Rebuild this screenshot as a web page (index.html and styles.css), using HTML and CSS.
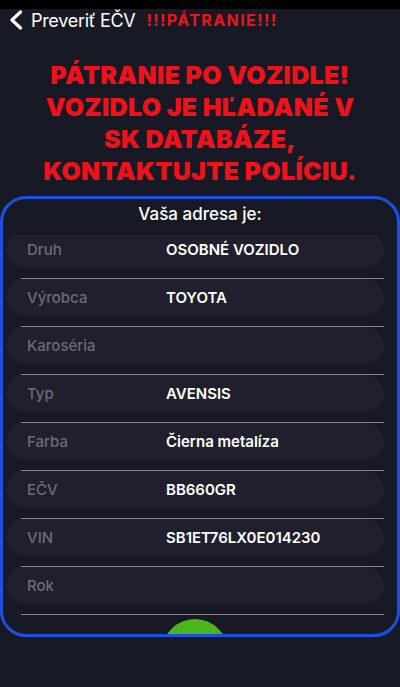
FILE: index.html
```html
<!DOCTYPE html>
<html>
    <head>
        <meta charset="utf-8">
        <link rel="stylesheet" href="styles.css">
    </head>
    <body>
        <div class="statusbar"></div>
        <div class="nav">
            <svg class="back" width="14" height="20" viewBox="0 0 14 20">
                <path d="M11.5 2 L3 10 L11.5 18" fill="none" stroke="#fff" stroke-width="3.2" stroke-linecap="round" stroke-linejoin="round"/>
            </svg>
            <span class="navTitle">Preveriť EČV</span>
            <span class="navAlert">!!!PÁTRANIE!!!</span>
        </div>

        <div class="warning">
            PÁTRANIE PO VOZIDLE!<br>
            VOZIDLO JE HĽADANÉ V<br>
            SK DATABÁZE,<br>
            KONTAKTUJTE POLÍCIU.
        </div>

        <div class="card">
            <div class="cardTitle">Vaša adresa je:</div>
            <div class="listWrap">
                <ul class="list">
                    <li><div class="pill"><span class="label">Druh</span><span class="value">OSOBNÉ VOZIDLO</span></div><div class="line"></div></li>
                    <li><div class="pill"><span class="label">Výrobca</span><span class="value">TOYOTA</span></div><div class="line"></div></li>
                    <li><div class="pill"><span class="label">Karoséria</span><span class="value"></span></div><div class="line"></div></li>
                    <li><div class="pill"><span class="label">Typ</span><span class="value">AVENSIS</span></div><div class="line"></div></li>
                    <li><div class="pill"><span class="label">Farba</span><span class="value">Čierna metalíza</span></div><div class="line"></div></li>
                    <li><div class="pill"><span class="label">EČV</span><span class="value">BB660GR</span></div><div class="line"></div></li>
                    <li><div class="pill"><span class="label">VIN</span><span class="value">SB1ET76LX0E014230</span></div><div class="line"></div></li>
                    <li><div class="pill"><span class="label">Rok</span><span class="value"></span></div><div class="line"></div></li>
                </ul>
                <div class="okBtn"></div>
            </div>
        </div>
    </body>
</html>
```

FILE: styles.css
```css
*{
    padding: 0;
    margin: 0;
    box-sizing: border-box;
}
body{
    width: 400px;
    height: 687px;
    overflow: hidden;
    background-color: #171a25;
    font-family: Inter, "Noto Sans", sans-serif;
    color: #fff;
}
.statusbar{
    height: 9px;
    background-color: #000;
}
.nav{
    height: 22px;
    display: flex;
    align-items: center;
    padding-left: 9px;
}
.back{
    margin-right: 8px;
}
.navTitle{
    font-size: 18px;
    letter-spacing: -0.3px;
}
.navAlert{
    margin-left: 11px;
    font-size: 16px;
    font-weight: 700;
    color: #f0121b;
    letter-spacing: 1.4px;
}
.warning{
    margin-top: 28px;
    text-align: center;
    font-size: 25px;
    line-height: 32px;
    font-weight: 900;
    color: #f0111a;
    letter-spacing: 0.3px;
}
.card{
    margin-top: 9px;
    height: 441px;
    border: 3px solid #1c50e0;
    border-radius: 26px;
    overflow: hidden;
}
.cardTitle{
    height: 36px;
    padding-top: 4px;
    text-align: center;
    font-size: 17px;
    line-height: 22px;
    font-weight: 500;
}
.listWrap{
    overflow: hidden;
}
.list{
    list-style: none;
    margin-top: -4px;
}
.pill{
    height: 37px;
    margin: 0 13px 10px 3px;
    border-radius: 19px;
    background-color: #201f2d;
    display: flex;
    align-items: center;
    padding-left: 21px;
}
.label{
    width: 139px;
    font-size: 15px;
    font-weight: 500;
    color: #6c6b78;
}
.value{
    font-size: 15px;
    font-weight: 600;
    color: #fff;
}
.line{
    height: 1px;
    margin: 0 13px 0 18px;
    background-color: #85848f;
}
.okBtn{
    width: 66px;
    height: 66px;
    margin: 4px 0 0 159px;
    border-radius: 50%;
    background-color: #4bb51c;
}
```
